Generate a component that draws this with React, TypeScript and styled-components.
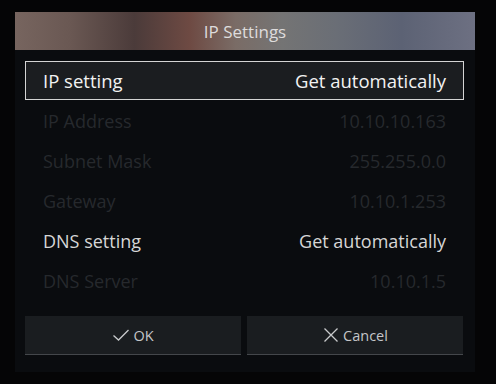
import React from "react";
import styled, { createGlobalStyle } from "styled-components";

interface IRow {
  label: string;
  value: string;
  state: "selected" | "active" | "disabled";
}

const rows: Array<IRow> = [
  { label: "IP setting", value: "Get automatically", state: "selected" },
  { label: "IP Address", value: "10.10.10.163", state: "disabled" },
  { label: "Subnet Mask", value: "255.255.0.0", state: "disabled" },
  { label: "Gateway", value: "10.10.1.253", state: "disabled" },
  { label: "DNS setting", value: "Get automatically", state: "active" },
  { label: "DNS Server", value: "10.10.1.5", state: "disabled" },
];

const GlobalStyle = createGlobalStyle`
  html, body {
    margin: 0;
    padding: 0;
    background: #050506;
    font-family: "Open Sans", "Noto Sans", sans-serif;
  }
`;

const Screen = styled.div`
  width: 496px;
  height: 384px;
  padding: 12px 0 0 15px;
  box-sizing: border-box;
  background: #050506;
`;

const Dialog = styled.div`
  width: 460px;
  height: 360px;
  background: #0a0c0f;
  display: flex;
  flex-direction: column;
`;

const Header = styled.div`
  height: 38px;
  display: flex;
  align-items: center;
  justify-content: center;
  color: #dedcdc;
  font-size: 17px;
  background: linear-gradient(
    90deg,
    #77655f 0%,
    #6a5853 12%,
    #4b3b3a 26%,
    #6e4a43 38%,
    #7a6c66 48%,
    #747474 58%,
    #6a6e76 70%,
    #5c6274 84%,
    #6d7082 100%
  );
`;

const Body = styled.div`
  padding: 11px 11px 0 10px;
  display: flex;
  flex-direction: column;
`;

const Row = styled.div<{ $state: IRow["state"] }>`
  box-sizing: border-box;
  padding: 0 17px;
  display: flex;
  align-items: center;
  justify-content: space-between;
  font-size: ${(p) => (p.$state === "selected" ? "18.5px" : "18px")};
  font-weight: ${(p) => (p.$state === "selected" ? 500 : 400)};
  color: ${(p) =>
    p.$state === "selected"
      ? "#f2f2f2"
      : p.$state === "active"
      ? "#d6d6d6"
      : "#26292d"};
  background: ${(p) => (p.$state === "selected" ? "#1b1d20" : "transparent")};
  border: 1px solid
    ${(p) => (p.$state === "selected" ? "#d4d4d4" : "transparent")};
  margin-bottom: ${(p) => (p.$state === "selected" ? "1px" : "0")};
  height: ${(p) => (p.$state === "selected" ? "39px" : "40px")};
`;

const Buttons = styled.div`
  margin-top: 15px;
  display: grid;
  grid-template-columns: 216px 216px;
  gap: 6px;
`;

const Button = styled.div`
  height: 39px;
  box-sizing: border-box;
  background: #1a1d20;
  border-bottom: 1px solid #44474b;
  display: flex;
  align-items: center;
  justify-content: center;
  gap: 3px;
  color: #c4c6c8;
  font-size: 14.5px;
`;

const Icon = styled.svg`
  width: 18px;
  height: 18px;
  stroke: #c8cacc;
  fill: none;
  stroke-width: 1.3;
`;

export default function App() {
  return (
    <>
      <GlobalStyle />
      <Screen>
        <Dialog>
          <Header>IP Settings</Header>
          <Body>
            {rows.map((row) => (
              <Row key={row.label} $state={row.state}>
                <span>{row.label}</span>
                <span>{row.value}</span>
              </Row>
            ))}
            <Buttons>
              <Button>
                <Icon viewBox="0 0 18 18">
                  <path d="M1.5 9.5 L6.5 14 L16.5 4" />
                </Icon>
                OK
              </Button>
              <Button>
                <Icon viewBox="0 0 18 18">
                  <path d="M2.5 2.5 L15.5 15.5 M15.5 2.5 L2.5 15.5" />
                </Icon>
                Cancel
              </Button>
            </Buttons>
          </Body>
        </Dialog>
      </Screen>
    </>
  );
}
